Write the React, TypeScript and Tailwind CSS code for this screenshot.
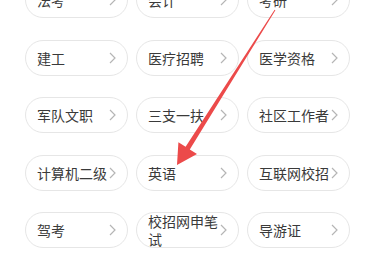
const items = [
  "法考",
  "会计",
  "考研",
  "建工",
  "医疗招聘",
  "医学资格",
  "军队文职",
  "三支一扶",
  "社区工作者",
  "计算机二级",
  "英语",
  "互联网校招",
  "驾考",
  "校招网申笔试",
  "导游证",
];

function Chevron() {
  return (
    <svg width="7" height="12" viewBox="0 0 7 12" className="shrink-0">
      <path d="M1 1 L6 6 L1 11" fill="none" stroke="#b5b5b5" strokeWidth="1.2" />
    </svg>
  );
}

export default function App() {
  return (
    <div
      className="relative w-[377px] h-[277px] overflow-hidden bg-white"
      style={{ fontFamily: '"Noto Sans CJK SC", "Noto Sans", sans-serif' }}
    >
      <div className="grid grid-cols-[103px_103px_103px] gap-x-2 gap-y-[21.5px] pl-[25px] -mt-[18px]">
        {items.map((name) => (
          <div
            key={name}
            className="h-9 flex items-center justify-between px-[11px] rounded-full border border-[#e6e6e6] bg-white"
          >
            <span className="flex-1 min-w-0 text-[14px] leading-[18px] text-[#3a3a3a]">{name}</span>
            <Chevron />
          </div>
        ))}
      </div>

      <svg className="absolute inset-0 pointer-events-none" width="377" height="277" viewBox="0 0 377 277">
        <polygon
          points="275.4,10.3 189.8,149.4 197,154 177,165 178.4,142.2 185.6,146.8 274.6,9.7"
          fill="#ec4a4a"
        />
      </svg>
    </div>
  );
}
